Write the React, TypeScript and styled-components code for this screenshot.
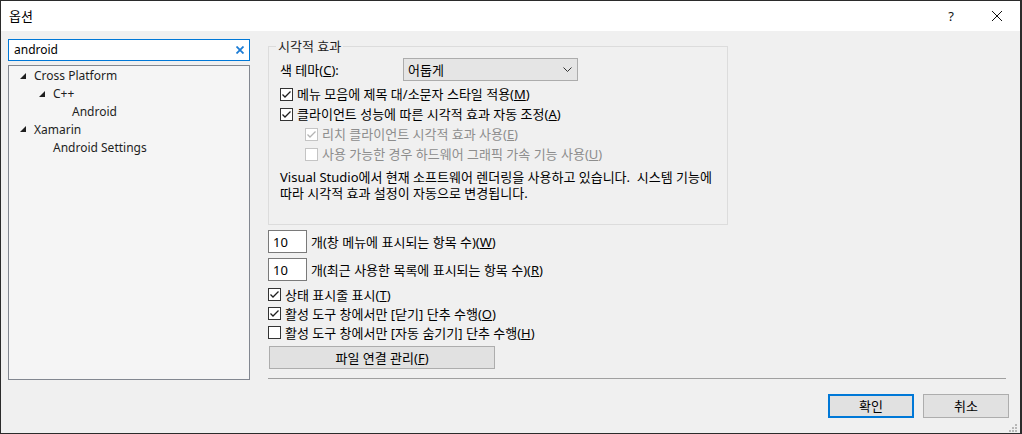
import React from "react";
import styled, { createGlobalStyle } from "styled-components";

const GlobalStyle = createGlobalStyle`
  html, body {
    margin: 0;
    padding: 0;
    background: #f0f0f0;
  }
  body {
    font-family: "Noto Sans", "Noto Sans CJK KR", sans-serif;
    font-size: 13px;
    color: #000;
  }
`;

const Window = styled.div`
  position: relative;
  width: 1022px;
  height: 434px;
  box-sizing: border-box;
  border: 1px solid #2b2b2b;
  border-right-width: 2px;
  background: #f0f0f0;
  display: flex;
  flex-direction: column;
  overflow: hidden;
`;

const TitleBar = styled.div`
  height: 30px;
  background: #fff;
  display: flex;
  align-items: center;
  flex-shrink: 0;
`;

const Title = styled.div`
  flex: 1;
  padding-left: 8px;
  line-height: 16px;
`;

const CaptionButton = styled.div`
  width: 46px;
  height: 30px;
  display: flex;
  align-items: center;
  justify-content: center;
  font-size: 13px;
  color: #111;
`;

const Body = styled.div`
  flex: 1;
  display: flex;
  gap: 18px;
  padding: 8px 11px 0 7px;
  min-height: 0;
`;

const LeftColumn = styled.div`
  width: 242px;
  display: flex;
  flex-direction: column;
  flex-shrink: 0;
  font-size: 12px;
`;

const SearchBox = styled.div`
  height: 22px;
  box-sizing: border-box;
  border: 1px solid #0078d7;
  background: #fff;
  display: flex;
  align-items: center;
  padding: 0 5px;
`;

const SearchText = styled.span`
  flex: 1;
  line-height: 16px;
`;

const Tree = styled.div`
  margin-top: 4px;
  height: 315px;
  box-sizing: border-box;
  border: 1px solid #828790;
  background: #f5f5f5;
  padding-top: 1px;
`;

const TreeRow = styled.div<{ $level: number }>`
  height: 17.8px;
  display: flex;
  align-items: center;
  padding-left: ${(p) => 11 + p.$level * 19}px;
  color: #1e1e1e;
`;

const Toggle = styled.span`
  width: 14px;
  display: flex;
  align-items: center;
`;

const RightColumn = styled.div`
  flex: 1;
  display: flex;
  flex-direction: column;
`;

const Group = styled.fieldset`
  width: 460px;
  box-sizing: border-box;
  margin: 0;
  padding: 0;
  border: 1px solid #dcdcdc;
`;

const GroupLabel = styled.legend`
  margin-left: 7px;
  padding: 0 2px;
  line-height: 14px;
  color: #1e1e1e;
`;

const GroupBody = styled.div`
  padding: 5px 0 23px 11px;
`;

const ComboRow = styled.div`
  height: 23px;
  display: flex;
  align-items: center;
  margin-bottom: 3px;
`;

const ComboLabel = styled.span`
  width: 123px;
`;

const Combo = styled.div`
  width: 175px;
  height: 23px;
  box-sizing: border-box;
  border: 1px solid #acacac;
  background: #e5e5e5;
  display: flex;
  align-items: center;
  justify-content: space-between;
  padding: 0 5px 0 4px;
`;

const CheckRow = styled.div<{ $indent?: number; $height?: number }>`
  height: ${(p) => p.$height ?? 20}px;
  display: flex;
  align-items: center;
  gap: 4px;
  padding-left: ${(p) => p.$indent ?? 0}px;
`;

const Box = styled.span<{ $disabled?: boolean }>`
  width: 13px;
  height: 13px;
  box-sizing: border-box;
  border: 1px solid ${(p) => (p.$disabled ? "#c4c4c4" : "#333")};
  background: #fff;
  display: flex;
  align-items: center;
  justify-content: center;
  flex-shrink: 0;
`;

const Label = styled.span<{ $disabled?: boolean }>`
  color: ${(p) => (p.$disabled ? "#8d8d8d" : "#000")};
  line-height: 16px;
  white-space: nowrap;
`;

const Note = styled.p`
  margin: 5px 0 0;
  line-height: 16px;
`;

const NumberRow = styled.div`
  margin-top: 5px;
  height: 23px;
  display: flex;
  align-items: center;
  gap: 4px;
`;

const NumberBox = styled.div`
  width: 39px;
  height: 23px;
  box-sizing: border-box;
  border: 1px solid #7a7a7a;
  background: #fff;
  padding-left: 4px;
  display: flex;
  align-items: center;
`;

const Checks = styled.div`
  margin-top: 4px;
`;

const PushButton = styled.div<{ $default?: boolean; $width: number; $height: number }>`
  width: ${(p) => p.$width}px;
  height: ${(p) => p.$height}px;
  box-sizing: border-box;
  border: ${(p) => (p.$default ? "2px solid #0078d7" : "1px solid #adadad")};
  background: #e1e1e1;
  display: flex;
  align-items: center;
  justify-content: center;
  line-height: 16px;
`;

const FileButton = styled(PushButton)`
  margin-top: 4px;
  margin-left: 1px;
`;

const Separator = styled.div`
  margin-top: 9px;
  margin-right: 3px;
  height: 1px;
  background: #a0a0a0;
`;

const Footer = styled.div`
  margin-top: 15px;
  display: flex;
  justify-content: flex-end;
  gap: 9px;
`;

const Gripper = styled.svg`
  position: absolute;
  right: 3px;
  bottom: 1px;
`;

const Check = ({ checked, disabled }: { checked?: boolean; disabled?: boolean }) => (
  <Box $disabled={disabled}>
    {checked && (
      <svg width="11" height="11" viewBox="0 0 11 11">
        <polyline
          points="1.5,5.5 4,8 9.5,2.5"
          fill="none"
          stroke={disabled ? "#b3b3b3" : "#1e1e1e"}
          strokeWidth="1.3"
        />
      </svg>
    )}
  </Box>
);

const Expander = () => (
  <svg width="6" height="6" viewBox="0 0 6 6">
    <polygon points="6,0 6,6 0,6" fill="#1e1e1e" />
  </svg>
);

const treeItems = [
  { level: 0, text: "Cross Platform", open: true },
  { level: 1, text: "C++", open: true },
  { level: 2, text: "Android" },
  { level: 0, text: "Xamarin", open: true },
  { level: 1, text: "Android Settings" },
];

const Key = ({ k }: { k: string }) => (
  <>
    (<u>{k}</u>)
  </>
);

export default function App() {
  return (
    <>
      <GlobalStyle />
      <Window>
        <TitleBar>
          <Title>옵션</Title>
          <CaptionButton>?</CaptionButton>
          <CaptionButton>
            <svg width="10" height="10" viewBox="0 0 10 10">
              <path d="M0 0 L10 10 M10 0 L0 10" stroke="#111" strokeWidth="1" />
            </svg>
          </CaptionButton>
        </TitleBar>

        <Body>
          <LeftColumn>
            <SearchBox>
              <SearchText>android</SearchText>
              <svg width="8" height="8" viewBox="0 0 8 8">
                <path d="M0.5 0.5 L7.5 7.5 M7.5 0.5 L0.5 7.5" stroke="#1c7cd5" strokeWidth="1.8" />
              </svg>
            </SearchBox>
            <Tree>
              {treeItems.map((item) => (
                <TreeRow key={item.text + item.level} $level={item.level}>
                  <Toggle>{item.open && <Expander />}</Toggle>
                  {item.text}
                </TreeRow>
              ))}
            </Tree>
          </LeftColumn>

          <RightColumn>
            <Group>
              <GroupLabel>시각적 효과</GroupLabel>
              <GroupBody>
                <ComboRow>
                  <ComboLabel>
                    색 테마<Key k="C" />:
                  </ComboLabel>
                  <Combo>
                    <span>어둡게</span>
                    <svg width="9" height="5" viewBox="0 0 9 5">
                      <polyline points="0.5,0.5 4.5,4.5 8.5,0.5" fill="none" stroke="#333" strokeWidth="1" />
                    </svg>
                  </Combo>
                </ComboRow>
                <CheckRow>
                  <Check checked />
                  <Label>
                    메뉴 모음에 제목 대/소문자 스타일 적용<Key k="M" />
                  </Label>
                </CheckRow>
                <CheckRow>
                  <Check checked />
                  <Label>
                    클라이언트 성능에 따른 시각적 효과 자동 조정<Key k="A" />
                  </Label>
                </CheckRow>
                <CheckRow $indent={25}>
                  <Check checked disabled />
                  <Label $disabled>
                    리치 클라이언트 시각적 효과 사용<Key k="E" />
                  </Label>
                </CheckRow>
                <CheckRow $indent={25}>
                  <Check disabled />
                  <Label $disabled>
                    사용 가능한 경우 하드웨어 그래픽 가속 기능 사용<Key k="U" />
                  </Label>
                </CheckRow>
                <Note>
                  Visual Studio에서 현재 소프트웨어 렌더링을 사용하고 있습니다.&nbsp; 시스템 기능에
                  <br />
                  따라 시각적 효과 설정이 자동으로 변경됩니다.
                </Note>
              </GroupBody>
            </Group>

            <NumberRow>
              <NumberBox>10</NumberBox>
              <Label>
                개(창 메뉴에 표시되는 항목 수)<Key k="W" />
              </Label>
            </NumberRow>
            <NumberRow>
              <NumberBox>10</NumberBox>
              <Label>
                개(최근 사용한 목록에 표시되는 항목 수)<Key k="R" />
              </Label>
            </NumberRow>

            <Checks>
              <CheckRow $height={19}>
                <Check checked />
                <Label>
                  상태 표시줄 표시<Key k="T" />
                </Label>
              </CheckRow>
              <CheckRow $height={19}>
                <Check checked />
                <Label>
                  활성 도구 창에서만 [닫기] 단추 수행<Key k="O" />
                </Label>
              </CheckRow>
              <CheckRow $height={19}>
                <Check />
                <Label>
                  활성 도구 창에서만 [자동 숨기기] 단추 수행<Key k="H" />
                </Label>
              </CheckRow>
            </Checks>

            <FileButton $width={226} $height={23}>
              파일 연결 관리<Key k="F" />
            </FileButton>

            <Separator />

            <Footer>
              <PushButton $default $width={86} $height={24}>
                확인
              </PushButton>
              <PushButton $width={86} $height={24}>
                취소
              </PushButton>
            </Footer>
          </RightColumn>
        </Body>

        <Gripper width="8" height="8" viewBox="0 0 8 8">
          {[
            [6, 0],
            [3, 3],
            [6, 3],
            [0, 6],
            [3, 6],
            [6, 6],
          ].map(([x, y]) => (
            <rect key={`${x}-${y}`} x={x} y={y} width="2" height="2" fill="#b8b8b8" />
          ))}
        </Gripper>
      </Window>
    </>
  );
}
